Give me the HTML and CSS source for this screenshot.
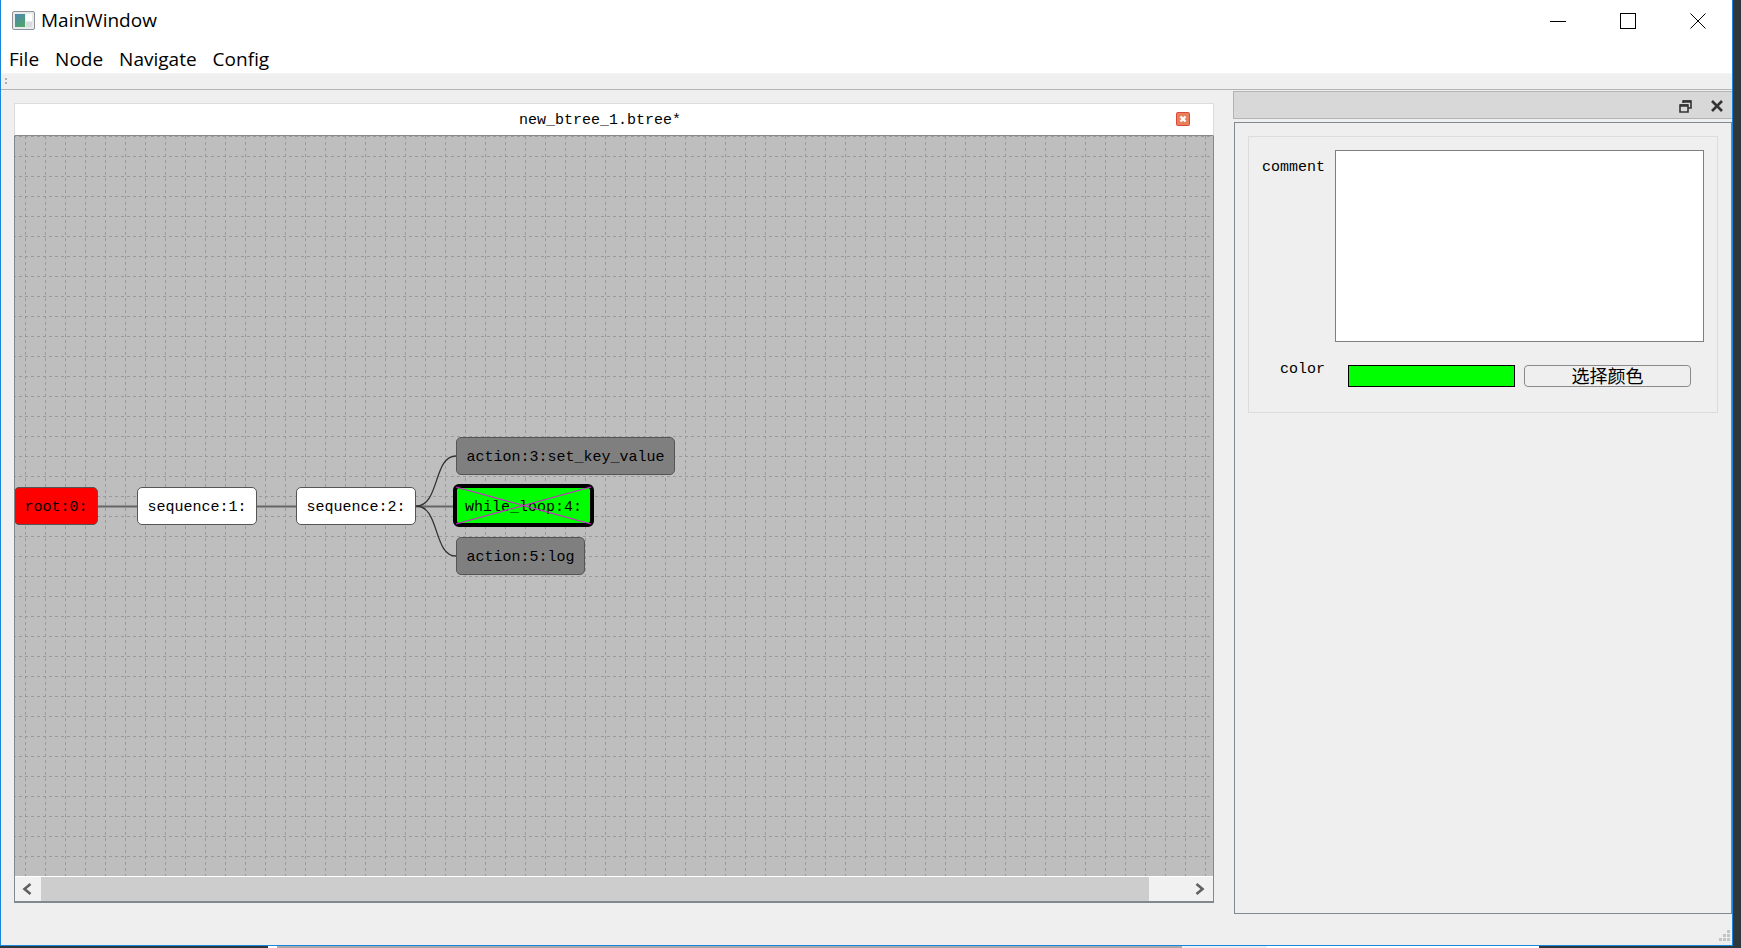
FILE: index.html
```html
<!DOCTYPE html>
<html lang="en">
<head>
    <meta charset="UTF-8">
    <meta name="viewport" content="width=device-width, initial-scale=1.0">
    <title>MainWindow</title>
    <link rel="stylesheet" href="styles.css">
</head>
<body>
    <div class="window">
        <div class="titlebar">
            <svg class="app-icon" width="23" height="19" viewBox="0 0 23 19">
                <defs>
                    <linearGradient id="appGrad" x1="0" y1="0" x2="0.6" y2="1">
                        <stop offset="0" stop-color="#4f86b8"/>
                        <stop offset="1" stop-color="#4fa36c"/>
                    </linearGradient>
                </defs>
                <rect x="0.5" y="0.5" width="22" height="18" rx="1.5" fill="#e8eaec" stroke="#8b929a"/>
                <rect x="3" y="3" width="10" height="13" fill="url(#appGrad)"/>
                <rect x="14" y="3" width="6" height="7" fill="#fff"/>
                <rect x="14" y="11" width="6" height="5" fill="#d8dcdc"/>
            </svg>
            <span class="app-title">MainWindow</span>
            <div class="win-buttons">
                <div class="win-btn">
                    <svg width="16" height="16" viewBox="0 0 16 16"><path d="M0 8.5H16" stroke="#000"/></svg>
                </div>
                <div class="win-btn">
                    <svg width="16" height="16" viewBox="0 0 16 16"><rect x="0.5" y="0.5" width="15" height="15" fill="none" stroke="#000"/></svg>
                </div>
                <div class="win-btn">
                    <svg width="16" height="16" viewBox="0 0 16 16"><path d="M0.5 0.5L15.5 15.5M15.5 0.5L0.5 15.5" stroke="#000"/></svg>
                </div>
            </div>
        </div>

        <div class="menubar">
            <span>File</span>
            <span>Node</span>
            <span>Navigate</span>
            <span>Config</span>
        </div>

        <div class="toolbar">
            <div class="grip"></div>
        </div>

        <div class="main">
            <div class="editor">
                <div class="tab-head">
                    <span class="tab-title">new_btree_1.btree*</span>
                    <svg class="tab-close" width="14" height="14" viewBox="0 0 14 14">
                        <rect x="0.5" y="0.5" width="13" height="13" rx="1" fill="#e8805c" stroke="#d9483a"/>
                        <path d="M4.5 4.5L9.5 9.5M9.5 4.5L4.5 9.5" stroke="#fff" stroke-width="2.4"/>
                    </svg>
                </div>
                <div class="canvas">
                    <svg class="scene" width="1198" height="740">
                        <defs>
                            <pattern id="grid" x="10" y="0" width="60" height="60" patternUnits="userSpaceOnUse">
                                <path d="M0 0.5H60M0 20.5H60M0 40.5H60M0.5 0V60M20.5 0V60M40.5 0V60" stroke="#999" stroke-dasharray="3 3" fill="none"/>
                            </pattern>
                        </defs>
                        <rect width="1198" height="740" fill="url(#grid)"/>
                        <path d="M83 370.5H122M242 370.5H281M401 370.5H440" stroke="#666" stroke-width="2"/>
                        <path d="M401 370C425 370 418 320 441 320M401 370C425 370 418 420 441 420" stroke="#333" stroke-width="1.3" fill="none"/>
                    </svg>
                    <div class="node node-root">root:0:</div>
                    <div class="node node-seq1">sequence:1:</div>
                    <div class="node node-seq2">sequence:2:</div>
                    <div class="node node-off node-act3">action:3:set_key_value</div>
                    <div class="node node-loop">
                        while_loop:4:
                        <svg class="cross" width="141" height="43" viewBox="0 0 141 43">
                            <path d="M3 3L138 40M138 3L3 40" stroke="#d61fd6" stroke-width="1.2"/>
                        </svg>
                    </div>
                    <div class="node node-off node-act5">action:5:log</div>
                </div>
                <div class="hscroll">
                    <svg class="arrow arrow-left" width="10" height="12" viewBox="0 0 10 12"><path d="M8.5 1L2.5 6L8.5 11" fill="none" stroke="#606060" stroke-width="2.6"/></svg>
                    <div class="thumb"></div>
                    <svg class="arrow" width="10" height="12" viewBox="0 0 10 12"><path d="M1.5 1L7.5 6L1.5 11" fill="none" stroke="#606060" stroke-width="2.6"/></svg>
                </div>
            </div>

            <div class="dock">
                <div class="dock-title">
                    <svg width="13" height="13" viewBox="0 0 13 13">
                        <path d="M4 3V1H12V8H9" fill="none" stroke="#333" stroke-width="1.6"/>
                        <path d="M1 5H9V12H1Z" fill="none" stroke="#333" stroke-width="1.6"/>
                        <path d="M1 5.5H9M4 1.5H12" stroke="#333" stroke-width="2.4"/>
                    </svg>
                    <svg width="12" height="12" viewBox="0 0 12 12"><path d="M1 1L11 11M11 1L1 11" stroke="#333" stroke-width="2.6"/></svg>
                </div>
                <div class="dock-panel">
                    <div class="group">
                        <label class="field-label">comment</label>
                        <textarea class="comment"></textarea>
                        <label class="field-label field-label-color">color</label>
                        <div class="color-row">
                            <div class="swatch"></div>
                            <button class="pick-color">选择颜色</button>
                        </div>
                    </div>
                </div>
            </div>
        </div>

        <div class="statusbar">
            <svg width="11" height="11" viewBox="0 0 11 11">
                <path d="M8 0h3v3H8zM4 4h3v3H4zM8 4h3v3H8zM0 8h3v3H0zM4 8h3v3H4zM8 8h3v3H8z" fill="#c4c4c4"/>
            </svg>
        </div>
    </div>

    <div class="behind">
        <div class="behind-dark"></div>
        <div class="behind-white"></div>
        <div class="behind-grey"></div>
        <div class="behind-light"></div>
        <div class="behind-paper"></div>
    </div>
</body>
</html>
```

FILE: styles.css
```css
html, body {
    margin: 0;
    padding: 0;
    height: 100%;
}
body {
    width: 1741px;
    height: 948px;
    overflow: hidden;
    background-color: #31383c;
    font-family: "Liberation Mono", monospace;
    color: #000000;
}
.window {
    width: 1731px;
    height: 945px;
    background-color: #efefef;
    border-left: 1px solid #1a86d8;
    border-right: 1px solid #1a86d8;
    border-bottom: 1px solid #1a86d8;
    display: flex;
    flex-direction: column;
}

/* title and menu */
.titlebar {
    height: 38px;
    flex: none;
    display: flex;
    align-items: center;
    background-color: #ffffff;
    font-family: "Open Sans", sans-serif;
}
.app-icon {
    margin-left: 11px;
    margin-top: 3px;
}
.app-title {
    margin-left: 6px;
    margin-top: 2px;
    font-size: 19px;
}
.win-buttons {
    margin-left: auto;
    display: flex;
}
.win-btn {
    width: 70px;
    height: 38px;
    display: flex;
    align-items: center;
    justify-content: center;
    padding: 3px 0 0 2px;
    box-sizing: border-box;
}
.menubar {
    height: 36px;
    flex: none;
    box-sizing: border-box;
    padding: 6px 0 0 8px;
    display: flex;
    gap: 16px;
    align-items: center;
    background-color: #ffffff;
    border-bottom: 1px solid #f4f4f4;
    font-family: "Open Sans", sans-serif;
    font-size: 19px;
}
.toolbar {
    height: 16px;
    flex: none;
    box-sizing: border-box;
    padding: 4px 0 0 4px;
    background-color: #efefef;
    border-bottom: 1px solid #b4b4b4;
}
.grip {
    width: 2px;
    height: 8px;
    background-image: linear-gradient(#b0b0b0 50%, transparent 50%);
    background-size: 2px 4px;
}

/* editor on the left */
.main {
    flex: 1;
    display: flex;
    min-height: 0;
}
.editor {
    width: 1200px;
    height: 800px;
    margin: 13px 0 0 13px;
    flex: none;
    display: flex;
    flex-direction: column;
    box-sizing: border-box;
    border-left: 1px solid #808890;
    border-right: 1px solid #808890;
    border-bottom: 2px solid #808890;
}
.tab-head {
    height: 33px;
    flex: none;
    box-sizing: border-box;
    margin: 0 -1px;
    padding-right: 28px;
    background-color: #ffffff;
    border: 1px solid #dcdcdc;
    border-bottom: 1px solid #888888;
    display: flex;
    align-items: center;
    justify-content: center;
    position: relative;
}
.tab-title {
    font-size: 15px;
    margin-top: 1px;
}
.tab-close {
    position: absolute;
    right: 23px;
    top: 8px;
}
.canvas {
    flex: 1;
    position: relative;
    background-color: #bebebe;
    overflow: hidden;
}
.scene {
    position: absolute;
    left: 0;
    top: 0;
}
.node {
    position: absolute;
    box-sizing: border-box;
    height: 38px;
    border: 1px solid #555555;
    border-radius: 5px;
    font-size: 15px;
    line-height: 40px;
    text-align: center;
    white-space: nowrap;
    background-color: #ffffff;
}
.node-root {
    left: -1px;
    top: 351px;
    width: 84px;
    background-color: #ff0000;
}
.node-seq1 {
    left: 122px;
    top: 351px;
    width: 120px;
}
.node-seq2 {
    left: 281px;
    top: 351px;
    width: 120px;
}
.node-off {
    background-color: #7f7f7f;
}
.node-act3 {
    left: 441px;
    top: 301px;
    width: 219px;
}
.node-act5 {
    left: 441px;
    top: 401px;
    width: 129px;
}
.node-loop {
    left: 438px;
    top: 348px;
    width: 141px;
    height: 43px;
    border: 4px solid #000000;
    border-radius: 6px;
    line-height: 39px;
    background-color: #00ff00;
}
.cross {
    position: absolute;
    left: -4px;
    top: -4px;
}

/* scrollbar under the canvas */
.hscroll {
    height: 25px;
    flex: none;
    box-sizing: border-box;
    border-top: 1px solid #ffffff;
    background-color: #f1f1f1;
    display: flex;
    align-items: center;
}
.arrow {
    flex: none;
    margin: 0 8px;
}
.arrow-left {
    margin: 0 9px 0 7px;
}
.thumb {
    flex: none;
    width: 1108px;
    height: 24px;
    margin-right: 38px;
    background-color: #cdcdcd;
}

/* dock on the right */
.dock {
    flex: 1;
    margin: 1px 0 0 19px;
    display: flex;
    flex-direction: column;
}
.dock-title {
    height: 28px;
    flex: none;
    box-sizing: border-box;
    background-color: #d8d8d8;
    border: 1px solid #b4b4b4;
    border-right: none;
    display: flex;
    align-items: center;
    justify-content: flex-end;
    gap: 19px;
    padding: 2px 9px 0 0;
}
.dock-panel {
    width: 498px;
    height: 792px;
    flex: none;
    box-sizing: border-box;
    margin: 3px 0 0 1px;
    border: 1px solid #808890;
    padding: 13px 13px 0 13px;
}
.group {
    box-sizing: border-box;
    height: 277px;
    border: 1px solid #dcdcdc;
    padding: 13px 13px 0 0;
    display: grid;
    grid-template-columns: 76px 1fr;
    grid-template-rows: 192px 22px;
    column-gap: 10px;
    row-gap: 23px;
}
.field-label {
    font-size: 15px;
    text-align: right;
    margin-top: 9px;
}
.field-label-color {
    margin-top: -4px;
}
.comment {
    display: block;
    width: 100%;
    height: 100%;
    box-sizing: border-box;
    margin: 0;
    padding: 0;
    resize: none;
    background-color: #ffffff;
    border: 1px solid #7f7f7f;
}
.color-row {
    display: flex;
    gap: 9px;
    padding-left: 13px;
}
.swatch {
    width: 167px;
    height: 22px;
    box-sizing: border-box;
    background-color: #00ff00;
    border: 1px solid #000000;
}
.pick-color {
    width: 167px;
    height: 22px;
    box-sizing: border-box;
    padding: 0 0 2px 0;
    background-color: #efefef;
    border: 1px solid #8a8a8a;
    border-radius: 4px;
    font-family: "Noto Sans CJK SC", sans-serif;
    font-size: 18px;
    line-height: 18px;
    color: #000000;
}

.statusbar {
    flex: none;
    height: 13px;
    display: flex;
    justify-content: flex-end;
    padding: 0 2px 2px 0;
}

/* what shows under the window */
.behind {
    height: 2px;
    display: flex;
}
.behind-dark {
    width: 268px;
    background-color: #31383c;
}
.behind-white {
    width: 9px;
    background-color: #ffffff;
}
.behind-grey {
    width: 905px;
    background-color: #a8a8a8;
}
.behind-light {
    width: 85px;
    background-color: #eeeeee;
}
.behind-paper {
    width: 272px;
    background-color: #ffffff;
}
```
